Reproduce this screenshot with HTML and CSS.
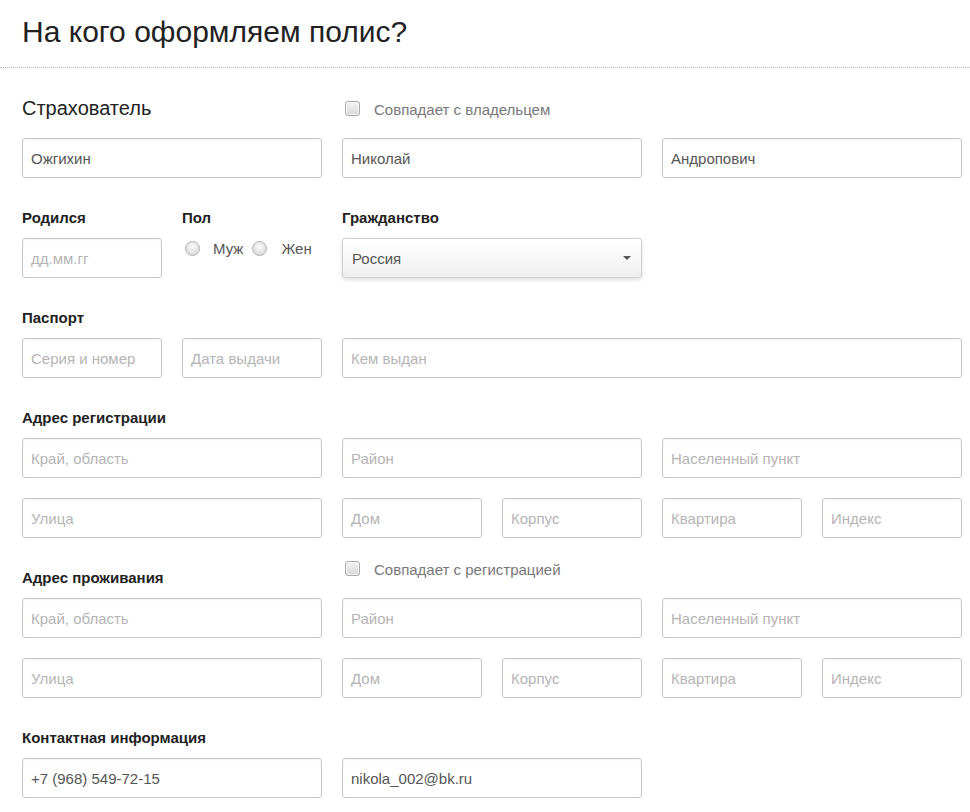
FILE: index.html
```html
<!DOCTYPE html>
<html lang="ru">
<head>
<meta charset="utf-8">
<title>На кого оформляем полис?</title>
<link rel="stylesheet" href="styles.css">
</head>
<body>
<header class="page-head">
  <h1 class="page-title">На кого оформляем полис?</h1>
</header>
<div class="divider"></div>

<form class="form">
  <div class="row head-row">
    <div class="s2 section-title">Страхователь</div>
    <label class="s4 check"><span class="checkbox"></span><span class="check-text">Совпадает с владельцем</span></label>
  </div>
  <div class="row">
    <div class="s2 field"><span class="value">Ожгихин</span></div>
    <div class="s2 field"><span class="value">Николай</span></div>
    <div class="s2 field"><span class="value">Андропович</span></div>
  </div>

  <div class="row label-row">
    <div class="s1 label">Родился</div>
    <div class="s1 label">Пол</div>
    <div class="s2 label">Гражданство</div>
  </div>
  <div class="row">
    <div class="s1 field"><span class="ph">дд.мм.гг</span></div>
    <div class="s1 radios">
      <span class="radio"></span><span class="radio-text">Муж</span>
      <span class="radio"></span><span class="radio-text">Жен</span>
    </div>
    <div class="s2 select"><span class="value">Россия</span><span class="caret"></span></div>
  </div>

  <div class="row label-row">
    <div class="s2 label">Паспорт</div>
  </div>
  <div class="row">
    <div class="s1 field"><span class="ph">Серия и номер</span></div>
    <div class="s1 field"><span class="ph">Дата выдачи</span></div>
    <div class="s4 field"><span class="ph">Кем выдан</span></div>
  </div>

  <div class="row label-row">
    <div class="s2 label">Адрес регистрации</div>
  </div>
  <div class="row">
    <div class="s2 field"><span class="ph">Край, область</span></div>
    <div class="s2 field"><span class="ph">Район</span></div>
    <div class="s2 field"><span class="ph">Населенный пункт</span></div>
  </div>
  <div class="row gap-row">
    <div class="s2 field"><span class="ph">Улица</span></div>
    <div class="s1 field"><span class="ph">Дом</span></div>
    <div class="s1 field"><span class="ph">Корпус</span></div>
    <div class="s1 field"><span class="ph">Квартира</span></div>
    <div class="s1 field"><span class="ph">Индекс</span></div>
  </div>

  <div class="row label-row">
    <div class="s2 label">Адрес проживания</div>
    <label class="s4 check check-up"><span class="checkbox"></span><span class="check-text">Совпадает с регистрацией</span></label>
  </div>
  <div class="row">
    <div class="s2 field"><span class="ph">Край, область</span></div>
    <div class="s2 field"><span class="ph">Район</span></div>
    <div class="s2 field"><span class="ph">Населенный пункт</span></div>
  </div>
  <div class="row gap-row">
    <div class="s2 field"><span class="ph">Улица</span></div>
    <div class="s1 field"><span class="ph">Дом</span></div>
    <div class="s1 field"><span class="ph">Корпус</span></div>
    <div class="s1 field"><span class="ph">Квартира</span></div>
    <div class="s1 field"><span class="ph">Индекс</span></div>
  </div>

  <div class="row label-row">
    <div class="s2 label">Контактная информация</div>
  </div>
  <div class="row">
    <div class="s2 field"><span class="value">+7 (968) 549-72-15</span></div>
    <div class="s2 field"><span class="value">nikola_002@bk.ru</span></div>
  </div>
</form>
</body>
</html>
```

FILE: styles.css
```css
html, body {
  margin: 0;
  padding: 0;
  background: #fff;
}
body {
  font-family: "Liberation Sans", Arial, sans-serif;
  color: #222;
  overflow: hidden;
}
.page-head {
  padding: 14px 22px 0;
}
.page-title {
  margin: 0;
  font-size: 30px;
  line-height: 36px;
  font-weight: normal;
  color: #222;
}
.divider {
  margin-top: 17px;
  border-top: 1px dotted #b8b8b8;
}
.form {
  padding: 30px 8px 0 22px;
}
.row {
  display: grid;
  grid-template-columns: repeat(6, 140px);
  column-gap: 20px;
}
.s1 { grid-column: span 1; }
.s2 { grid-column: span 2; }
.s4 { grid-column: span 4; }

.head-row {
  height: 20px;
  margin-bottom: 20px;
}
.section-title {
  font-size: 20px;
  line-height: 20px;
  color: #222;
}
.label-row {
  height: 20px;
  margin-top: 30px;
  margin-bottom: 10px;
}
.gap-row {
  margin-top: 20px;
}
.label {
  font-size: 15px;
  line-height: 20px;
  font-weight: bold;
  color: #222;
}
.check {
  display: flex;
  align-items: flex-start;
  height: 20px;
}
.check-up {
  margin-top: -10px;
}
.checkbox {
  flex-shrink: 0;
  box-sizing: border-box;
  width: 15px;
  height: 15px;
  margin: 3px 0 0 3px;
  border: 1px solid #a9a9a9;
  border-radius: 3px;
  background: linear-gradient(#f4f4f4, #d8d8d8);
  box-shadow: inset 0 0 0 1px rgba(255,255,255,0.7);
}
.check-text {
  margin-left: 14px;
  padding-top: 2px;
  font-size: 15px;
  line-height: 20px;
  color: #777;
}
.field, .select {
  box-sizing: border-box;
  height: 40px;
  border: 1px solid #c8c8c8;
  border-radius: 3px;
  padding: 0 8px;
  display: flex;
  align-items: center;
  font-size: 15px;
  background: #fff;
  box-shadow: inset 0 1px 2px rgba(0,0,0,0.06);
}
.value {
  color: #555;
}
.ph {
  color: #b4b4b4;
}
.select {
  padding: 0 9px;
  justify-content: space-between;
  background: linear-gradient(#ffffff, #efefef);
  box-shadow: 0 2px 4px rgba(0,0,0,0.12);
  border-color: #d0d0d0;
}
.caret {
  width: 0;
  height: 0;
  margin-right: 1px;
  border-left: 4px solid transparent;
  border-right: 4px solid transparent;
  border-top: 4px solid #555;
}
.radios {
  display: flex;
  align-items: flex-start;
  padding-top: 2px;
  height: 40px;
  box-sizing: border-box;
}
.radio {
  flex-shrink: 0;
  box-sizing: border-box;
  width: 15px;
  height: 15px;
  margin: 1px 0 0 3px;
  border: 1px solid #b0b0b0;
  border-radius: 50%;
  background: radial-gradient(circle at 50% 35%, #fafafa, #d2d2d2);
}
.radio-text {
  flex-shrink: 0;
  margin-left: 13px;
  margin-right: 6px;
  font-size: 15px;
  line-height: 17px;
  color: #555;
}
.radio-text:last-child {
  margin-left: 14px;
}
```
